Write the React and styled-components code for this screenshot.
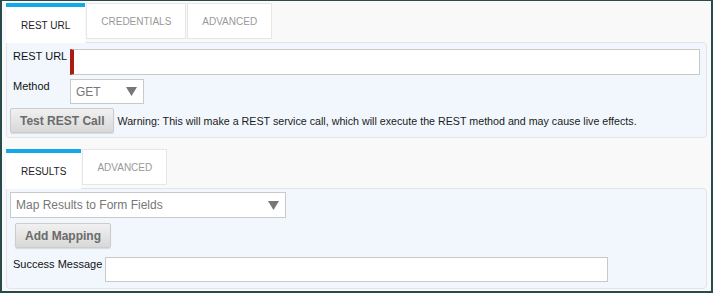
import React from 'react';
import styled, { createGlobalStyle } from 'styled-components';

const GlobalStyle = createGlobalStyle`
  body {
    margin: 0;
    font-family: "Liberation Sans", Arial, sans-serif;
  }
`;

const Frame = styled.div`
  width: 713px;
  height: 293px;
  box-sizing: border-box;
  border-style: solid;
  border-color: #284a4a;
  border-width: 1px 2px 2px 2px;
  background: #f9f9f9;
  padding: 2px 4px 0 4px;
  overflow: hidden;
`;

const Section = styled.div`
  margin-top: ${p => p.$top || 0}px;
`;

const TabRow = styled.div`
  display: flex;
  align-items: flex-start;
  gap: 1px;
  height: 39px;
`;

const Tab = styled.div`
  position: relative;
  z-index: 1;
  box-sizing: border-box;
  display: flex;
  align-items: center;
  justify-content: center;
  padding: 0 ${p => (p.$active ? 15 : 14)}px;
  background: #fff;
  font-size: 10px;
  text-transform: uppercase;
  white-space: nowrap;
  height: ${p => (p.$active ? 40 : 36)}px;
  color: ${p => (p.$active ? '#222' : '#999')};
  border: ${p => (p.$active ? 'none' : '1px solid #e6e6e6')};
  border-top: ${p => (p.$active ? '4px solid #15a8e8' : '1px solid #e6e6e6')};
`;

const Panel = styled.div`
  background: #f2f7fe;
  border: 1px solid #e1e5ea;
  border-radius: 0 4px 4px 4px;
  padding: ${p => p.$pad};
  display: flex;
  flex-direction: column;
  align-items: flex-start;
`;

const Row = styled.div`
  display: flex;
  align-self: stretch;
  align-items: ${p => p.$align || 'flex-start'};
  margin-top: ${p => p.$top || 0}px;
  margin-left: ${p => p.$left || 0}px;
`;

const Label = styled.div`
  width: ${p => p.$w}px;
  flex: none;
  margin-left: 3px;
  font-size: 11px;
  color: #111;
  padding-top: 1px;
  white-space: nowrap;
`;

const TextInput = styled.div`
  box-sizing: border-box;
  height: ${p => p.$h || 25}px;
  width: ${p => (p.$w ? `${p.$w}px` : 'auto')};
  flex: ${p => (p.$w ? 'none' : '1')};
  background: #fff;
  border: 1px solid #c9c9c9;
  border-left: ${p => (p.$required ? '4px solid #a81c14' : '1px solid #c9c9c9')};
`;

const Select = styled.div`
  box-sizing: border-box;
  flex: none;
  width: ${p => p.$w}px;
  height: ${p => p.$h}px;
  background: #fff;
  border: 1px solid #c9c9c9;
  display: flex;
  align-items: center;
  justify-content: space-between;
  padding: 0 6px 0 5px;
  font-size: 12px;
  color: #777;
  white-space: nowrap;
`;

const Button = styled.div`
  box-sizing: border-box;
  flex: none;
  height: 25px;
  padding: 0 9px;
  display: flex;
  align-items: center;
  font-size: 12px;
  font-weight: bold;
  color: #6b6b6b;
  white-space: nowrap;
  background: linear-gradient(#f1f1f1, #d8d8d8);
  border: 1px solid #cccccc;
  border-radius: 2px;
  box-shadow: 0 1px 1px rgba(0, 0, 0, 0.12);
`;

const Note = styled.div`
  margin-left: 3px;
  font-size: 10.7px;
  color: #1a1a1a;
  white-space: nowrap;
`;

const Arrow = () => (
  <svg width="11" height="9" viewBox="0 0 11 9">
    <polygon points="0,0 11,0 5.5,9" fill="#777" />
  </svg>
);

export default function App() {
  return (
    <>
      <GlobalStyle />
      <Frame>
        <Section>
          <TabRow>
            <Tab $active>REST URL</Tab>
            <Tab>Credentials</Tab>
            <Tab>Advanced</Tab>
          </TabRow>
          <Panel $pad="6px 6px 4px 3px">
            <Row>
              <Label $w={57}>REST URL</Label>
              <TextInput $h={26} $required />
            </Row>
            <Row $top={4}>
              <Label $w={57}>Method</Label>
              <Select $w={74} $h={25}>
                GET
                <Arrow />
              </Select>
            </Row>
            <Row $top={4} $align="center">
              <Button>Test REST Call</Button>
              <Note>
                Warning: This will make a REST service call, which will execute the REST method and may cause live effects.
              </Note>
            </Row>
          </Panel>
        </Section>
        <Section $top={11}>
          <TabRow>
            <Tab $active>Results</Tab>
            <Tab>Advanced</Tab>
          </TabRow>
          <Panel $pad="3px 6px 6px 3px">
            <Select $w={276} $h={26}>
              Map Results to Form Fields
              <Arrow />
            </Select>
            <Row $top={5} $left={5}>
              <Button>Add Mapping</Button>
            </Row>
            <Row $top={9}>
              <Label $w={92}>Success Message</Label>
              <TextInput $w={503} />
            </Row>
          </Panel>
        </Section>
      </Frame>
    </>
  );
}
